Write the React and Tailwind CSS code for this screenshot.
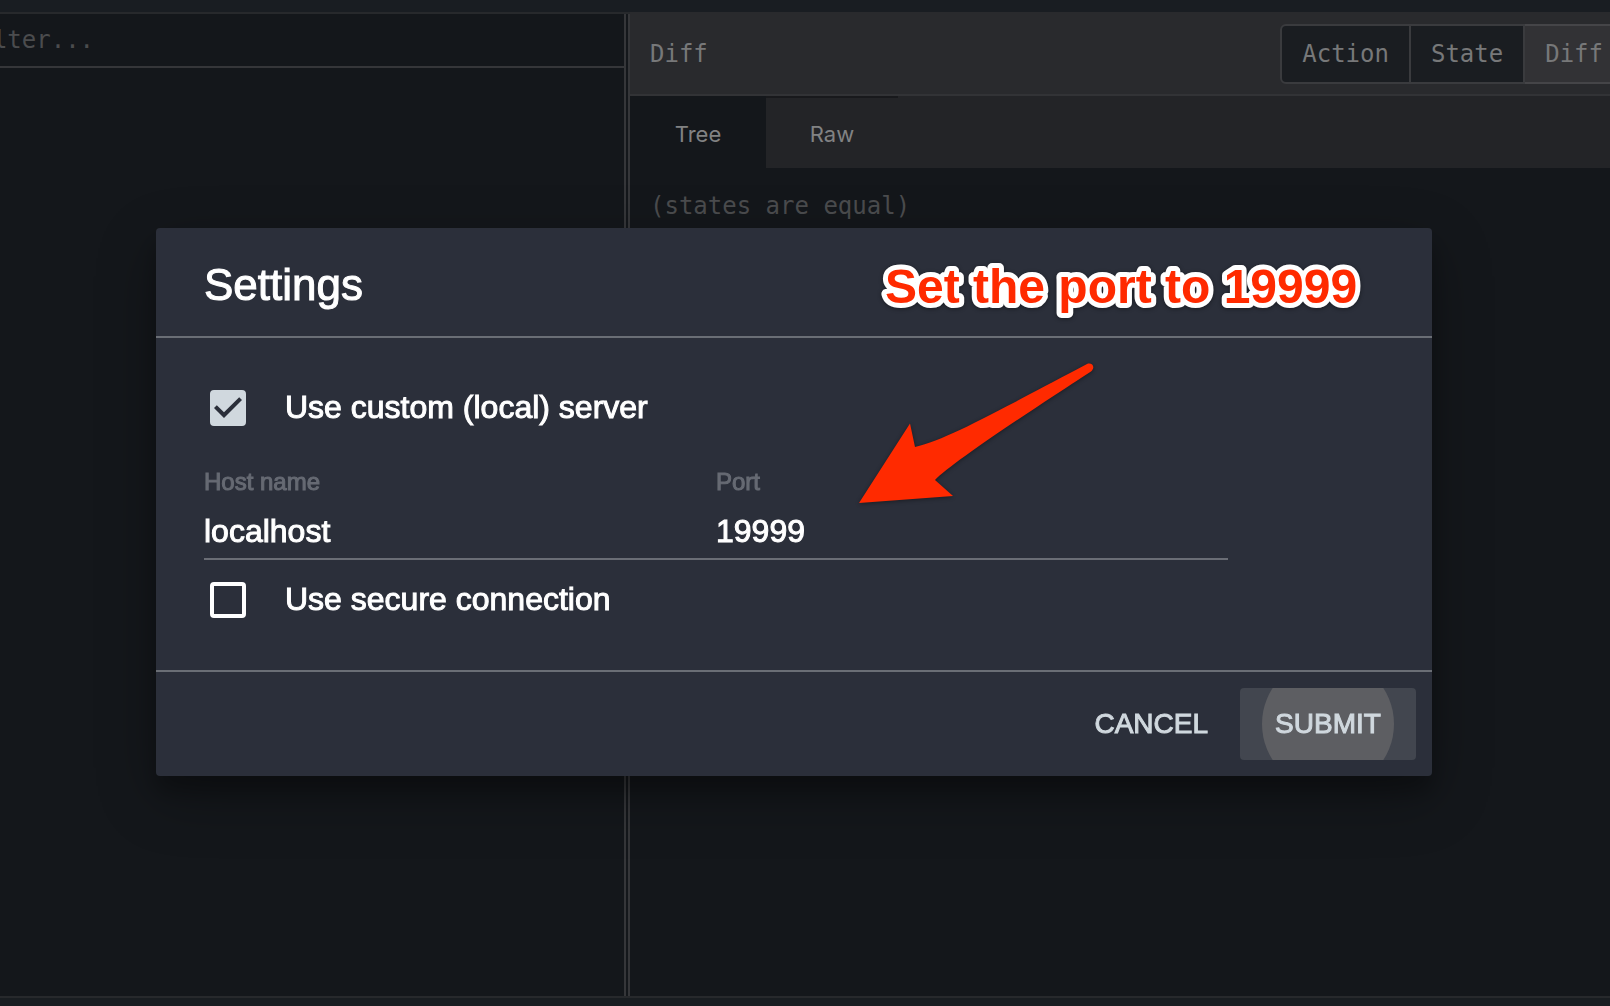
import React, { useState } from "react";

const SANS = "font-['Liberation_Sans',Arial,sans-serif]";
const MONO = "font-['DejaVu_Sans_Mono',monospace]";

function MonitorPane() {
  return (
    <section className="flex w-[626px] shrink-0 flex-col border-r-2 border-[#353639]">
      <div className="overflow-hidden border-b-2 border-[#353639]">
        <input
          type="text"
          aria-label="Filter"
          placeholder="Filter..."
          className="-ml-9 block h-[52px] w-full bg-transparent text-2xl text-[#4b4c4e] outline-none placeholder:text-[#4b4c4e]"
        />
      </div>
    </section>
  );
}

function InspectorPane() {
  return (
    <section className="ml-0.5 flex min-w-0 flex-1 flex-col border-l-2 border-[#353639]">
      <header className="-mt-0.5 flex h-[84px] items-center justify-between border-b-2 border-[#323336] bg-[#292a2d] pt-0.5 pl-5">
        <h2 className="text-2xl text-[#777879]">Diff</h2>
        <div className="flex h-[60px] text-2xl text-[#777879]">
          <button type="button" className="rounded-l-md border-2 border-[#3a3b3e] bg-[#1a1d21] px-5">
            Action
          </button>
          <button type="button" className="border-y-2 border-r-2 border-[#3a3b3e] bg-[#1a1d21] px-5">
            State
          </button>
          <button type="button" className="border-y-2 border-[#454548] bg-[#323235] pr-[7px] pl-5">
            Diff
          </button>
        </div>
      </header>
      <div
        role="tablist"
        className="flex h-[72px] bg-[#232427] font-[Inter,sans-serif] text-[22px] text-[#818283]"
      >
        <button type="button" role="tab" aria-selected="true" className="w-[136px] bg-[#14171b] pt-1">
          Tree
        </button>
        <button
          type="button"
          role="tab"
          aria-selected="false"
          className="w-[132px] border-t-2 border-[#18191c] pt-0.5"
        >
          Raw
        </button>
      </div>
      <p className="px-5 pt-[22px] text-2xl text-[#4b4c4e]">(states are equal)</p>
    </section>
  );
}

function CheckRow({ label, checked, onChange }) {
  return (
    <label className="flex h-[60px] items-center gap-[39px] pl-1.5 text-[32px] text-white">
      <span className="grid size-9 shrink-0">
        <input
          type="checkbox"
          checked={checked}
          onChange={onChange}
          className="peer col-start-1 row-start-1 size-9 appearance-none rounded border-4 border-white checked:border-[#d0d8de] checked:bg-[#d0d8de]"
        />
        <svg
          viewBox="3 3 18 18"
          aria-hidden="true"
          className="pointer-events-none invisible col-start-1 row-start-1 size-9 fill-[#2b2f3a] peer-checked:visible"
        >
          <path d="M10 17l-5-5 1.41-1.41L10 14.17l7.59-7.59L19 8z" />
        </svg>
      </span>
      <span className="pb-0.5">{label}</span>
    </label>
  );
}

function TextField({ id, label, defaultValue }) {
  return (
    <div className="min-w-0 flex-1">
      <label htmlFor={id} className="block text-2xl leading-7 text-[#666a73]">
        {label}
      </label>
      <input
        id={id}
        type="text"
        defaultValue={defaultValue}
        className="block h-16 w-full border-b-2 border-[#6a6d75] bg-transparent pt-2 text-[32px] text-white outline-none"
      />
    </div>
  );
}

function Callout() {
  return (
    <>
      <svg
        aria-label="Set the port to 19999"
        className="pointer-events-none absolute top-[26px] right-[63px] h-[72px] w-[496px] drop-shadow-[0_1px_2px_rgba(0,0,0,0.4)]"
      >
        <text
          x="12"
          y="49"
          className="fill-[#ff2a00] stroke-white stroke-[10px] text-5xl font-bold [paint-order:stroke] [stroke-linejoin:round]"
        >
          Set the port to 19999
        </text>
      </svg>
      <svg
        viewBox="0 0 240 144"
        aria-hidden="true"
        className="pointer-events-none absolute top-[134px] left-[702px] h-36 w-60 fill-[#ff2a00] drop-shadow-[0_1px_2px_rgba(0,0,0,0.4)]"
      >
        <path d="M1 141L52 61.500L57 85C91 77 143 47 229 2C234 0 238 5 233 9.500C143 68 92 103 77 118L95 134Z" />
      </svg>
    </>
  );
}

function SettingsDialog() {
  const [custom, setCustom] = useState(true);
  const [secure, setSecure] = useState(false);
  return (
    <div className={`fixed inset-0 flex items-center pr-[178px] pb-0.5 pl-[156px] ${SANS}`}>
      <form
        role="dialog"
        aria-labelledby="settings-title"
        onSubmit={(e) => e.preventDefault()}
        className="relative min-w-0 flex-1 rounded bg-[#2b2f3a] shadow-[0_20px_60px_rgba(0,0,0,0.3),0_16px_20px_rgba(0,0,0,0.22)] [-webkit-text-stroke-width:1px]"
      >
        <header className="flex h-[110px] items-center border-b-2 border-[#6a6e75] px-12 pt-1.5">
          <h1 id="settings-title" className="text-[44px] text-white">
            Settings
          </h1>
        </header>
        <div className="px-12 py-10">
          <CheckRow
            label="Use custom (local) server"
            checked={custom}
            onChange={(e) => setCustom(e.target.checked)}
          />
          <div className="mt-[30px] mb-2.5 flex max-w-[1024px]">
            <TextField id="host" label="Host name" defaultValue="localhost" />
            <TextField id="port" label="Port" defaultValue="19999" />
          </div>
          <CheckRow
            label="Use secure connection"
            checked={secure}
            onChange={(e) => setSecure(e.target.checked)}
          />
        </div>
        <footer className="flex justify-end border-t-2 border-[#6a6e75] p-4 text-[28px] text-[#d0d8de]">
          <button type="button" className="h-[72px] px-8">
            CANCEL
          </button>
          <button
            type="submit"
            className="relative h-[72px] w-44 overflow-hidden rounded bg-[#42464f]"
          >
            <span className="absolute top-1/2 left-1/2 size-[132px] -translate-x-1/2 -translate-y-1/2 rounded-full bg-[#5d5e62]" />
            <span className="relative">SUBMIT</span>
          </button>
        </footer>
        <Callout />
      </form>
    </div>
  );
}

export default function App() {
  return (
    <div className={`flex h-screen flex-col overflow-hidden bg-[#14171b] ${MONO}`}>
      <div className="h-3.5 shrink-0 border-b-2 border-[#27292c] bg-[#191d22]" />
      <main className="flex min-h-0 flex-1">
        <MonitorPane />
        <InspectorPane />
      </main>
      <div className="h-2.5 shrink-0 border-t-2 border-[#27292c] bg-[#191d21]" />
      <SettingsDialog />
    </div>
  );
}
